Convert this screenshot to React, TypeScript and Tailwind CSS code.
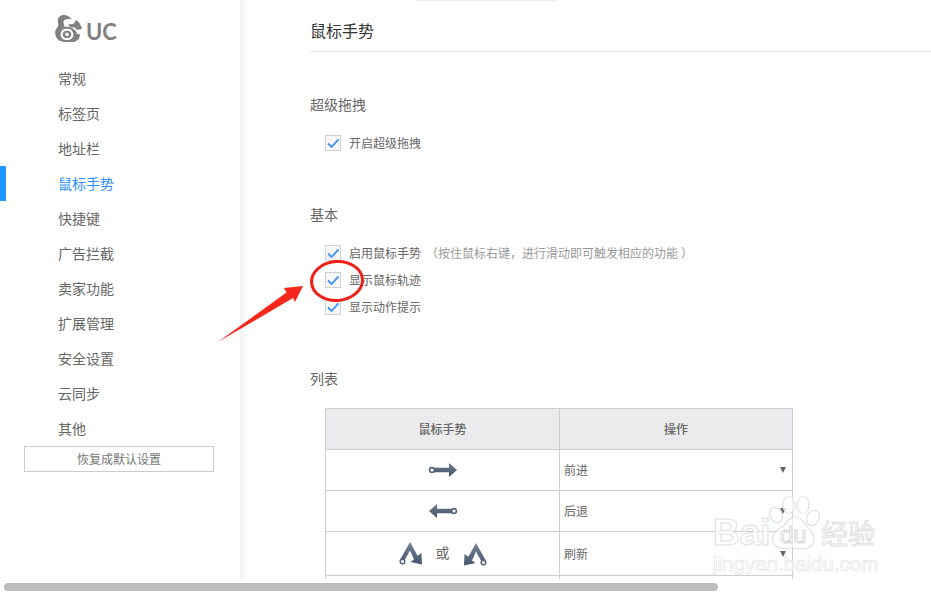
import React from "react";

const nav = ["常规", "标签页", "地址栏", "鼠标手势", "快捷键", "广告拦截", "卖家功能", "扩展管理", "安全设置", "云同步", "其他"];

function Check({ label, note }: { label: string; note?: string }) {
  return (
    <div className="flex items-center h-4 ml-[15px]">
      <span className="w-4 h-4 border border-[#d0d0d0] bg-[#f7f7f7] flex items-center justify-center shrink-0">
        <svg width="14" height="14" viewBox="0 0 14 14" fill="none">
          <path d="M2 7.5 L5.6 11 L12.5 3.4" stroke="#3f8ffb" strokeWidth="1.8" />
        </svg>
      </span>
      <span className="ml-2 text-xs text-[#666] whitespace-nowrap">{label}</span>
      {note && (
        <span className="ml-[5px] text-xs text-[#999] whitespace-nowrap">
          （{note}
          <span className="ml-[3px]">）</span>
        </span>
      )}
    </div>
  );
}

function ArrowRight({ flip }: { flip?: boolean }) {
  const id = flip ? "ga" : "gb";
  return (
    <svg width="30" height="16" viewBox="0 0 30 16" className={flip ? "-scale-x-100" : ""}>
      <defs>
        <linearGradient id={id} x1="0" y1="0" x2="0" y2="1">
          <stop offset="0" stopColor="#6d7c8d" />
          <stop offset="1" stopColor="#44546a" />
        </linearGradient>
      </defs>
      <path d="M5 5.7 H21 V1 L29 8 L21 15 V10.3 H5 Z" fill={`url(#${id})`} />
      <circle cx="4" cy="8" r="2.4" fill="#fff" stroke="#55657a" strokeWidth="1.6" />
    </svg>
  );
}

function ArrowUpDown({ flip }: { flip?: boolean }) {
  const id = flip ? "gc" : "gd";
  return (
    <svg width="24" height="24" viewBox="0 0 24 24" className={flip ? "-scale-x-100 mt-[2px]" : ""}>
      <defs>
        <linearGradient id={id} gradientUnits="userSpaceOnUse" x1="0" y1="0" x2="0" y2="24">
          <stop offset="0" stopColor="#74828f" />
          <stop offset="1" stopColor="#44546a" />
        </linearGradient>
      </defs>
      <path d="M1.2 17.5 L11 0 L18.6 13.8 L22.5 11 L23 22.6 L11.5 20 L15 17.4 L11 8.5 L4.8 19.8 Z" fill={`url(#${id})`} />
      <circle cx="3.5" cy="19.5" r="2.3" fill="#fff" stroke="#55657a" strokeWidth="1.5" />
    </svg>
  );
}

function Op({ label, tall }: { label: string; tall?: boolean }) {
  return (
    <td className="border border-[#cfcfcf] p-0">
      <div className="flex items-center justify-between pl-1 pr-[6px] text-xs text-[#666]">
        <span className={tall ? "pt-[1px]" : ""}>{label}</span>
        <span className="w-0 h-0 border-x-[3px] border-x-transparent border-t-[6px] border-t-[#666]" />
      </div>
    </td>
  );
}

export default function App() {
  return (
    <div
      className="relative w-[931px] h-[595px] overflow-hidden bg-white flex flex-col"
      style={{ fontFamily: '"Noto Sans CJK SC", "Liberation Sans", sans-serif' }}
    >
      <div className="flex h-[579px] overflow-hidden">
        <aside className="w-[240px] shrink-0 flex flex-col">
          <div className="h-[61px] pl-[55px] pt-[15px] flex items-start">
            <svg width="27" height="27" viewBox="0 0 27 27" fill="#808080">
              <path d="M17 4.5 C15 1.5 11 -0.5 7 0.2 C3.5 1 2 4 3 7.5 C3.7 10 3.2 12 1.5 13.5 C-0.5 16 -0.2 21 2.5 24 C4.5 26.3 7.5 27 11 27 L15 27 C9.5 27 4.8 23.5 4.6 18.5 C4.5 15 7 12.3 9.8 11.5 C9 9.5 8 8 8.6 6.2 C9.5 4.2 13 3.6 17 4.5 Z" />
              <path fillRule="evenodd" d="M12 11.7 A7.7 7.7 0 1 1 12 27 A7.7 7.7 0 1 1 12 11.7 Z M12 13.7 A5.7 5.7 0 1 0 12 25 A5.7 5.7 0 1 0 12 13.7 Z M12 15.7 A3.7 3.7 0 1 1 12 23 A3.7 3.7 0 1 1 12 15.7 Z M12 17.6 A1.8 1.8 0 1 0 12 21.2 A1.8 1.8 0 1 0 12 17.6 Z" />
              <path d="M13 9.5 L18.5 9 L21 5 L23 6.5 L25 9 L27 13 L26 14.3 L21.5 14.8 L20 12.5 L15 12 Z" />
              <path d="M15.5 13 L20.5 15.5 L22 18 L18.5 18 Z" />
              <path d="M20 18 L25 19.5 L24 24 L19.5 27 L14.5 27 C18 25.5 20.5 22.5 20 18 Z" />
            </svg>
            <span className="ml-1 mt-[3px] text-[22px] leading-[28px] text-[#808080] font-bold" style={{ fontFamily: "Lato, sans-serif" }}>
              UC
            </span>
          </div>
          {nav.map((n) => (
            <div
              key={n}
              className={
                "h-[35px] pb-[2px] flex items-center text-sm " +
                (n === "鼠标手势"
                  ? "border-l-[6px] border-[#2196ff] pl-[52px] text-[#2f8ffb]"
                  : "pl-[58px] text-[#666]")
              }
            >
              {n}
            </div>
          ))}
          <div className="ml-6 w-[190px] h-[26px] shrink-0 border border-[#ccc] flex items-center justify-center text-xs text-[#777]">
            恢复成默认设置
          </div>
        </aside>
        <div className="w-2 shrink-0 bg-gradient-to-r from-[#f1f1f1] to-white" />
        <main className="flex-1 min-w-0 pl-[62px]">
          <div className="ml-[106px] w-[140px] h-px bg-[#eeeeee]" />
          <h1 className="h-[51px] pt-[18px] leading-[22px] text-base font-normal text-[#333] border-b border-[#e2e2e2]">
            鼠标手势
          </h1>
          <h2 className="mt-[42px] pb-px h-[21px] leading-5 text-sm font-normal text-[#666]">超级拖拽</h2>
          <div className="mt-5">
            <Check label="开启超级拖拽" />
          </div>
          <h2 className="mt-[53px] h-[21px] leading-5 text-sm font-normal text-[#666]">基本</h2>
          <div className="mt-5 flex flex-col gap-[11px]">
            <Check label="启用鼠标手势" note="按住鼠标右键，进行滑动即可触发相应的功能" />
            <Check label="显示鼠标轨迹" />
            <Check label="显示动作提示" />
          </div>
          <h2 className="mt-[53px] h-[21px] leading-5 text-sm font-normal text-[#666]">列表</h2>
          <table className="mt-[19px] ml-[15px] w-[467px] table-fixed border-collapse">
            <colgroup>
              <col className="w-[234px]" />
              <col className="w-[233px]" />
            </colgroup>
            <tbody>
              <tr className="h-[41px] bg-[#ebebed]">
                <th className="border border-[#cfcfcf] text-xs font-medium text-[#666]">鼠标手势</th>
                <th className="border border-[#cfcfcf] text-xs font-medium text-[#666]">操作</th>
              </tr>
              <tr className="h-[41px]">
                <td className="border border-[#cfcfcf] p-0">
                  <div className="flex justify-center"><ArrowRight /></div>
                </td>
                <Op label="前进" />
              </tr>
              <tr className="h-[41px]">
                <td className="border border-[#cfcfcf] p-0">
                  <div className="flex justify-center"><ArrowRight flip /></div>
                </td>
                <Op label="后退" />
              </tr>
              <tr className="h-[44px]">
                <td className="border border-[#cfcfcf] p-0">
                  <div className="flex items-center justify-center text-sm text-[#666]">
                    <ArrowUpDown />
                    <span className="mx-[13px] -mt-1">或</span>
                    <ArrowUpDown flip />
                  </div>
                </td>
                <Op label="刷新" tall />
              </tr>
              <tr className="h-[41px]">
                <td className="border border-[#cfcfcf]" />
                <td className="border border-[#cfcfcf]" />
              </tr>
            </tbody>
          </table>
        </main>
      </div>
      <div className="h-4 pl-1 pt-1 shrink-0">
        <div className="w-[714px] h-2 rounded-full bg-[#bdbdbd]" />
      </div>

      {/* annotation over the screenshot */}
      <svg className="absolute left-0 top-0 pointer-events-none" width="931" height="595" fill="none">
        <polygon points="218,342 286.5,292.5 284,288 303,286 295,302 293,298" fill="#f5261b" />
        <ellipse cx="337" cy="281" rx="25.5" ry="19.5" stroke="#ee2018" strokeWidth="3" transform="rotate(-4 337 281)" />
      </svg>

      {/* watermark */}
      <div className="absolute left-[713px] top-[495px] w-[170px] h-[82px] pointer-events-none">
        <svg className="absolute left-0 top-0" width="170" height="60" fill="rgba(255,255,255,0.65)" stroke="#e0e0e0" strokeWidth="1.2">
          <ellipse cx="63" cy="20" rx="6" ry="8" transform="rotate(-25 63 20)" />
          <ellipse cx="76" cy="10" rx="6" ry="8.5" />
          <ellipse cx="90" cy="10" rx="6" ry="8.5" />
          <ellipse cx="100" cy="23" rx="6" ry="8" transform="rotate(25 100 23)" />
          <path d="M82 22 C90 22 92 31 98 36 C105 44 100 54 90 54 C84 54 80 52 76 53 C66 56 58 50 60 41 C62 34 72 32 74 27 C76 23 79 22 82 22 Z" />
        </svg>
        <span
          className="absolute left-0 top-[19px] text-[37px] leading-[37px] font-bold text-white/70 [-webkit-text-stroke:1px_#e0e0e0]"
          style={{ fontFamily: '"Liberation Sans", sans-serif' }}
        >
          Bai
        </span>
        <span
          className="absolute left-[67px] top-[26px] text-[24px] leading-[28px] text-white/70 [-webkit-text-stroke:1px_#d8d8d8]"
          style={{ fontFamily: '"Liberation Sans", sans-serif' }}
        >
          du
        </span>
        <span className="absolute left-[108px] top-[22px] text-[27px] leading-[32px] text-white/70 [-webkit-text-stroke:1px_#e0e0e0]">
          经验
        </span>
        <span
          className="absolute left-0 top-[58px] text-[20.5px] leading-[22px] text-white/70 whitespace-nowrap [-webkit-text-stroke:0.6px_#e2e2e2]"
          style={{ fontFamily: '"Liberation Sans", sans-serif' }}
        >
          jingyan.baidu.com
        </span>
      </div>
    </div>
  );
}
